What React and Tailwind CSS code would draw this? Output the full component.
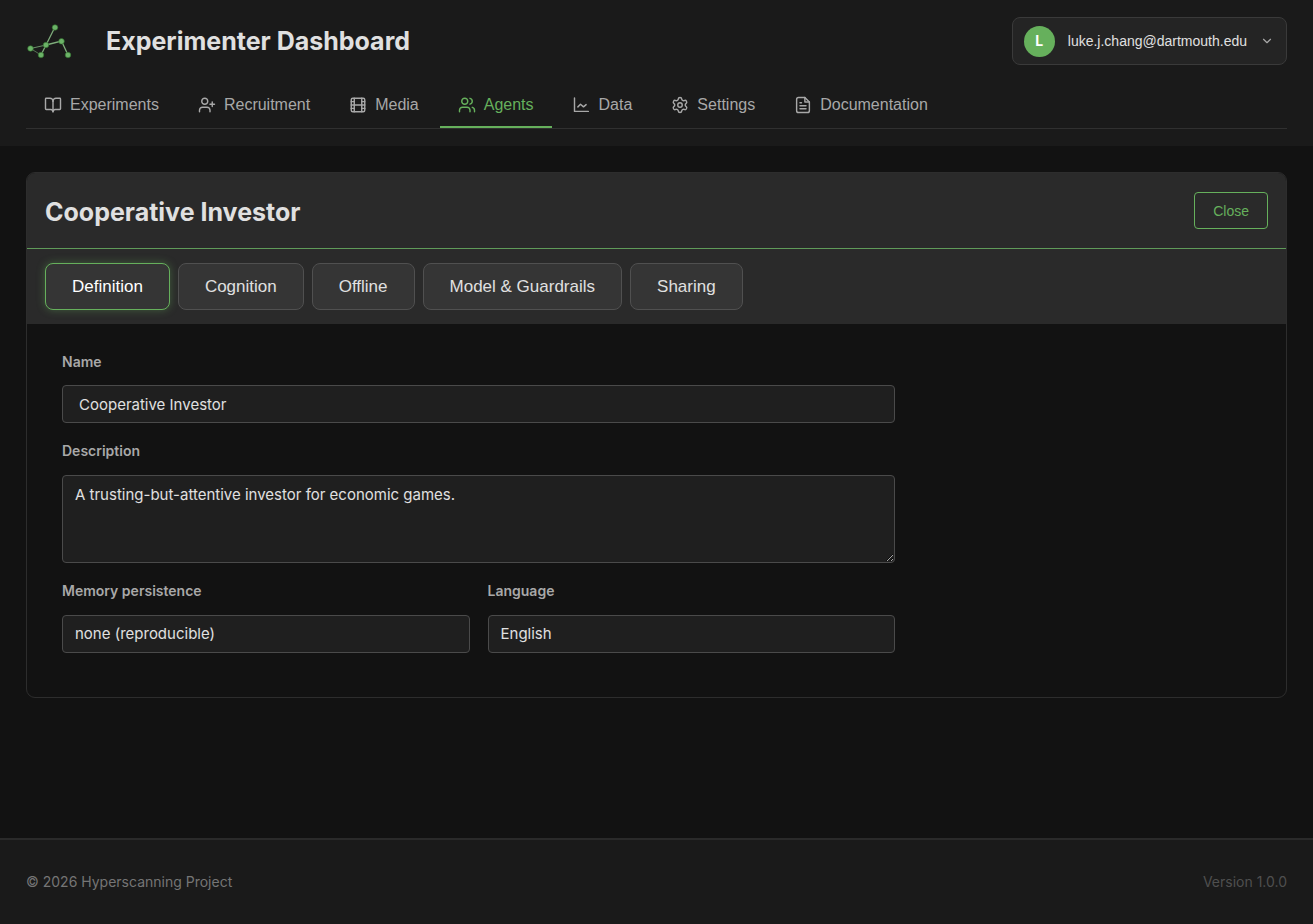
import React, {useState} from "react";
import {BookOpen, UserPlus, Film, Users, Settings, ChevronDown} from "lucide-react";

const ChartIcon = ({size = 18, strokeWidth = 1.5}) => (
    <svg width={size} height={size} viewBox="0 0 24 24" fill="none" stroke="currentColor" strokeWidth={strokeWidth}
         strokeLinecap="round" strokeLinejoin="round">
        <path d="M2 2.500V20.500H20.500"/>
        <path d="M6.500 14.500L10 11L14 14.500L17.500 11.500"/>
    </svg>
)

const DocIcon = ({size = 18, strokeWidth = 1.5}) => (
    <svg width={size} height={size} viewBox="0 0 24 24" fill="none" stroke="currentColor" strokeWidth={strokeWidth}
         strokeLinecap="round" strokeLinejoin="round">
        <path d="M14.500 2H6a2.500 2.500 0 0 0-2.500 2.500v15A2.500 2.500 0 0 0 6 22h12a2.500 2.500 0 0 0 2.500-2.500V8z"/>
        <path d="M14.500 2v6h6"/>
        <path d="M8 9h2"/>
        <path d="M8 13h8"/>
        <path d="M8 17h8"/>
    </svg>
)

const navItems = [
    {name: "Experiments", icon: BookOpen},
    {name: "Recruitment", icon: UserPlus},
    {name: "Media", icon: Film},
    {name: "Agents", icon: Users},
    {name: "Data", icon: ChartIcon},
    {name: "Settings", icon: Settings},
    {name: "Documentation", icon: DocIcon},
]

const tabs = ["Definition", "Cognition", "Offline", "Model & Guardrails", "Sharing"]

const fieldClass = "w-full rounded-[4px] border border-[#4a4a4a] bg-[#1f1f1f] text-[15px] text-[#e0e0e0] outline-none"
const labelClass = "block text-sm leading-5 font-semibold text-[#a8a8a8]"

const Logo = () => (
    <svg width="46" height="40" viewBox="0 0 46 40" fill="none">
        <g stroke="#7fae7c" strokeWidth="1.3">
            <path d="M29 6L20 24"/>
            <path d="M20 24L35.500 20L42 34"/>
            <path d="M20 24L15 34"/>
            <path d="M4.500 27.500L20 24" strokeWidth="0.800"/>
            <path d="M4.500 27.500L15 34" strokeWidth="0.600"/>
        </g>
        <g fill="#6cb268" stroke="#2c6b29" strokeWidth="0.600">
            <circle cx="29" cy="6.500" r="2.800"/>
            <circle cx="20" cy="24" r="2.800"/>
            <circle cx="35.500" cy="20.300" r="2.800"/>
            <circle cx="42" cy="34" r="2.800"/>
            <circle cx="15" cy="34" r="2.800"/>
            <circle cx="4.500" cy="27.500" r="2.800"/>
        </g>
    </svg>
)

const Header = () => (
    <header className="bg-[#1a1a1a] px-[26px] pt-[17px] pb-[17px]">
        <div className="flex h-12 items-center justify-between">
            <div className="flex items-center gap-[34px]">
                <Logo/>
                <h1 className="text-[25px] leading-8 font-bold text-[#e0e0e0]">Experimenter Dashboard</h1>
            </div>
            <button type="button"
                    className="flex h-12 items-center gap-[13px] rounded-lg border border-[#3a3a3a] bg-[#242424] pr-3 pl-[11px]">
                <span
                    className="flex size-[31px] items-center justify-center rounded-full bg-[#66b05c] text-sm font-bold text-white">L</span>
                <span className="font-['Liberation_Sans',sans-serif] text-sm text-[#e0e0e0]">luke.j.chang@dartmouth.edu</span>
                <ChevronDown size={14} strokeWidth={2} className="text-[#a8a8a8]"/>
            </button>
        </div>
        <nav className="mt-4 flex gap-[3px] border-b border-[#303030]">
            {navItems.map(({name, icon: Icon}) => (
                <a key={name} href={`#${name.toLowerCase()}`}
                   aria-current={name === "Agents" ? "page" : undefined}
                   className={`flex h-[47px] items-center gap-2 border-b-2 px-[18px] pt-[2px] font-['Liberation_Sans',sans-serif] text-base ${name === "Agents" ? "border-[#66b05c] text-[#66b05c]" : "border-transparent text-[#a8a8a8]"}`}>
                    <Icon size={18} strokeWidth={1.9}/>
                    {name}
                </a>
            ))}
        </nav>
    </header>
)

const AgentForm = () => (
    <form className="flex max-w-[903px] flex-col gap-[18px] px-[35px] pt-7 pb-[44px]">
        <div>
            <label htmlFor="name" className={labelClass}>Name</label>
            <input id="name" type="text" defaultValue="Cooperative Investor"
                   className={`${fieldClass} mt-[13px] block h-[38px] px-4`}/>
        </div>
        <div>
            <label htmlFor="description" className={labelClass}>Description</label>
            <textarea id="description" defaultValue="A trusting-but-attentive investor for economic games."
                      className={`${fieldClass} mt-[14px] block h-[88px] resize-y px-3 py-2 leading-[22px]`}/>
        </div>
        <div className="grid grid-cols-2 gap-[18px]">
            <div>
                <label htmlFor="memory" className={labelClass}>Memory persistence</label>
                <select id="memory" className={`${fieldClass} mt-[14px] block h-[38px] appearance-none px-3`}>
                    <option>none (reproducible)</option>
                </select>
            </div>
            <div>
                <label htmlFor="language" className={labelClass}>Language</label>
                <select id="language" className={`${fieldClass} mt-[14px] block h-[38px] appearance-none px-3`}>
                    <option>English</option>
                </select>
            </div>
        </div>
    </form>
)

const App = () => {
    const [activeTab, setActiveTab] = useState("Definition")

    return (
        <div className="flex min-h-screen flex-col bg-[#121212] font-['Inter',sans-serif]">
            <Header/>
            <main className="flex-1 p-[26px]">
                <section className="overflow-hidden rounded-[9px] border border-[#2d2d2d]">
                    <div
                        className="flex h-[76px] items-center justify-between border-b border-[#5f9a59] bg-[#2a2a2a] px-[18px]">
                        <h2 className="pt-[2px] text-[25px] leading-8 font-bold text-[#e0e0e0]">Cooperative Investor</h2>
                        <button type="button"
                                className="h-[37px] rounded-[4px] border border-[#66b05c] px-[18px] font-['Liberation_Sans',sans-serif] text-sm text-[#66b05c]">Close
                        </button>
                    </div>
                    <div className="flex gap-2 bg-[#2a2a2a] px-[18px] py-[14px]">
                        {tabs.map((tab) => (
                            <button key={tab} type="button" onClick={() => setActiveTab(tab)}
                                    className={`h-[47px] rounded-lg border bg-[#353535] px-[26px] font-['Liberation_Sans',sans-serif] text-[17px] ${tab === activeTab ? "border-[#66b05c] text-white shadow-[0_0_8px_rgba(102,176,92,0.4)]" : "border-[#505050] text-[#e0e0e0]"}`}>
                                {tab}
                            </button>
                        ))}
                    </div>
                    <AgentForm/>
                </section>
            </main>
            <footer
                className="flex h-[86px] items-center justify-between border-t-2 border-[#2a2a2a] bg-[#1a1a1a] px-[26px] text-sm">
                <span className="text-[#757575]">© 2026 Hyperscanning Project</span>
                <span className="text-[#4f4f4f]">Version 1.0.0</span>
            </footer>
        </div>
    )
}

export default App;
